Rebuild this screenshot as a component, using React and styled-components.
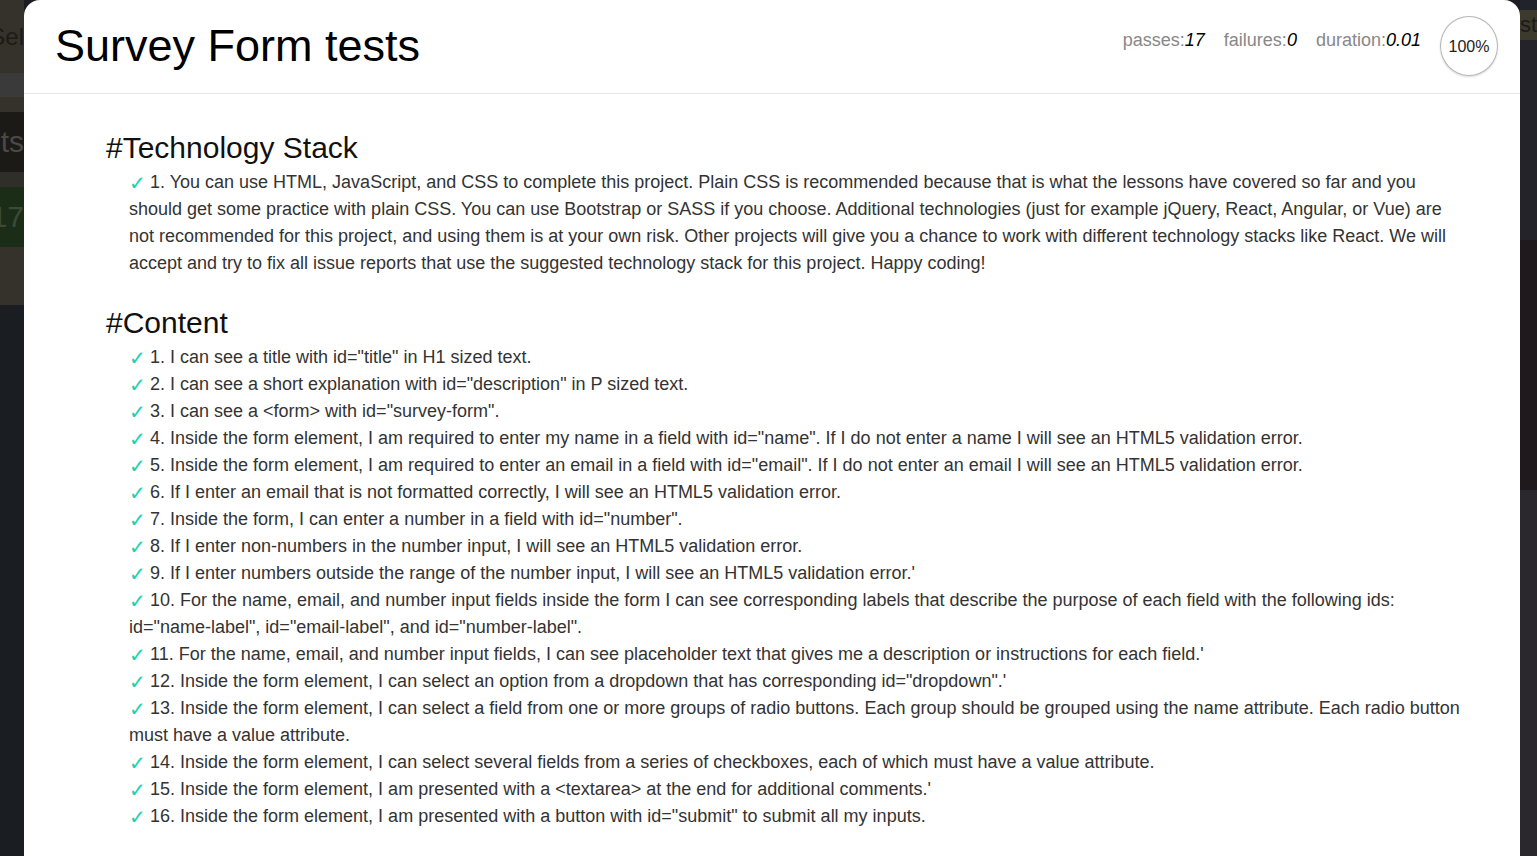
import React from 'react';
import styled, { createGlobalStyle } from 'styled-components';

const GlobalStyle = createGlobalStyle`
  html, body {
    margin: 0;
    padding: 0;
    height: 856px;
    overflow: hidden;
    background: #1a1d22;
    font-family: 'Liberation Sans', Arial, sans-serif;
  }
`;

const Page = styled.div`
  position: relative;
  width: 1537px;
  height: 856px;
  overflow: hidden;
`;

const Backdrop = styled.div`
  display: flex;
  height: 100%;
`;

const Strip = styled.div`
  display: flex;
  flex-direction: column;
  width: ${(p) => p.$w}px;
  overflow: hidden;
`;

const Middle = styled.div`
  flex: 1;
  background: #1c1d24;
`;

const Band = styled.div`
  height: ${(p) => (p.$h ? `${p.$h}px` : 'auto')};
  flex: ${(p) => (p.$h ? '0 0 auto' : 1)};
  background: ${(p) => p.$bg};
  color: ${(p) => p.$fg || 'transparent'};
  font-size: ${(p) => p.$fs || 24}px;
  line-height: ${(p) => (p.$h ? `${p.$h}px` : 'normal')};
  white-space: nowrap;
  display: flex;
  justify-content: ${(p) => (p.$right ? 'flex-end' : 'flex-start')};
  box-sizing: border-box;
`;

const Modal = styled.div`
  position: absolute;
  top: 0;
  left: 24px;
  width: 1496px;
  bottom: -20px;
  background: #fff;
  border-radius: 16px 16px 0 0;
  color: #333;
`;

const Header = styled.header`
  display: flex;
  align-items: center;
  justify-content: space-between;
  height: 94px;
  box-sizing: border-box;
  padding: 0 22px 2px 31px;
  border-bottom: 1px solid #e5e5e5;
`;

const Title = styled.h1`
  margin: 0;
  font-size: 45px;
  font-weight: 400;
  color: #000;
`;

const Stats = styled.div`
  display: flex;
  align-items: center;
  gap: 19px;
  font-size: 18px;
  color: #888;
`;

const Stat = styled.span`
  margin-top: -10px;
  em {
    color: #000;
    font-style: italic;
  }
`;

const Progress = styled.div`
  width: 56px;
  height: 56px;
  border-radius: 50%;
  border: 1px solid #b5b5b5;
  box-shadow: 0 1px 2px rgba(0, 0, 0, 0.15);
  display: flex;
  align-items: center;
  justify-content: center;
  font-size: 16px;
  color: #222;
  padding-top: 2px;
  margin-left: 0;
  box-sizing: content-box;
`;

const Body = styled.div`
  padding: 36px 56px 0 82px;
`;

const Suite = styled.section`
  margin-bottom: 28px;
`;

const SuiteTitle = styled.h2`
  margin: 0 0 3px;
  font-size: 30px;
  font-weight: 400;
  color: #111;
  line-height: 36px;
`;

const Tests = styled.ul`
  list-style: none;
  margin: 0;
  padding: 0 0 0 23px;
`;

const Test = styled.li`
  font-size: 18px;
  line-height: 27px;
  color: #333;
`;

const Check = styled.span`
  display: inline-block;
  width: 21px;
  color: #1cd3ad;
  font-family: 'DejaVu Sans', sans-serif;
  font-size: 20px;
  line-height: 22px;
  vertical-align: top;
  padding-top: 3px;
`;

const tech = [
  '1. You can use HTML, JavaScript, and CSS to complete this project. Plain CSS is recommended because that is what the lessons have covered so far and you should get some practice with plain CSS. You can use Bootstrap or SASS if you choose. Additional technologies (just for example jQuery, React, Angular, or Vue) are not recommended for this project, and using them is at your own risk. Other projects will give you a chance to work with different technology stacks like React. We will accept and try to fix all issue reports that use the suggested technology stack for this project. Happy coding!',
];

const content = [
  '1. I can see a title with id="title" in H1 sized text.',
  '2. I can see a short explanation with id="description" in P sized text.',
  '3. I can see a <form> with id="survey-form".',
  '4. Inside the form element, I am required to enter my name in a field with id="name". If I do not enter a name I will see an HTML5 validation error.',
  '5. Inside the form element, I am required to enter an email in a field with id="email". If I do not enter an email I will see an HTML5 validation error.',
  '6. If I enter an email that is not formatted correctly, I will see an HTML5 validation error.',
  '7. Inside the form, I can enter a number in a field with id="number".',
  '8. If I enter non-numbers in the number input, I will see an HTML5 validation error.',
  "9. If I enter numbers outside the range of the number input, I will see an HTML5 validation error.'",
  '10. For the name, email, and number input fields inside the form I can see corresponding labels that describe the purpose of each field with the following ids: id="name-label", id="email-label", and id="number-label".',
  "11. For the name, email, and number input fields, I can see placeholder text that gives me a description or instructions for each field.'",
  "12. Inside the form element, I can select an option from a dropdown that has corresponding id=\"dropdown\".'",
  '13. Inside the form element, I can select a field from one or more groups of radio buttons. Each group should be grouped using the name attribute. Each radio button must have a value attribute.',
  '14. Inside the form element, I can select several fields from a series of checkboxes, each of which must have a value attribute.',
  "15. Inside the form element, I am presented with a <textarea> at the end for additional comments.'",
  '16. Inside the form element, I am presented with a button with id="submit" to submit all my inputs.',
];

const suites = [
  { title: '#Technology Stack', tests: tech },
  { title: '#Content', tests: content },
];

export default function App() {
  return (
    <Page>
      <GlobalStyle />
      <Backdrop>
        <Strip $w={24}>
          <Band $h={73} $bg="#35322b" $fg="#1c1b18" $fs={24} $right>Sel</Band>
          <Band $h={24} $bg="#3a3a3b" />
          <Band $h={15} $bg="#35322b" />
          <Band $h={60} $bg="#1b1a17" $fg="#4a4946" $fs={30} $right>ts</Band>
          <Band $h={15} $bg="#302e28" />
          <Band $h={60} $bg="#1b2c17" $fg="#3c4a38" $fs={30} $right>17</Band>
          <Band $h={58} $bg="#35322b" />
          <Band $bg="#1a1d22" />
        </Strip>
        <Middle />
        <Strip $w={17}>
          <Band $h={10} $bg="#21232b" />
          <Band $h={30} $bg="#3c392d" $fg="#1c1b18" $fs={22}>st</Band>
          <Band $h={200} $bg="#25232a" />
          <Band $h={250} $bg="#1f181d" />
          <Band $bg="#2a282c" />
        </Strip>
      </Backdrop>
      <Modal>
        <Header>
          <Title>Survey Form tests</Title>
          <Stats>
            <Stat>passes:<em>17</em></Stat>
            <Stat>failures:<em>0</em></Stat>
            <Stat>duration:<em>0.01</em></Stat>
            <Progress>100%</Progress>
          </Stats>
        </Header>
        <Body>
          {suites.map((s) => (
            <Suite key={s.title}>
              <SuiteTitle>{s.title}</SuiteTitle>
              <Tests>
                {s.tests.map((t) => (
                  <Test key={t}>
                    <Check>✓</Check>
                    {t}
                  </Test>
                ))}
              </Tests>
            </Suite>
          ))}
        </Body>
      </Modal>
    </Page>
  );
}
